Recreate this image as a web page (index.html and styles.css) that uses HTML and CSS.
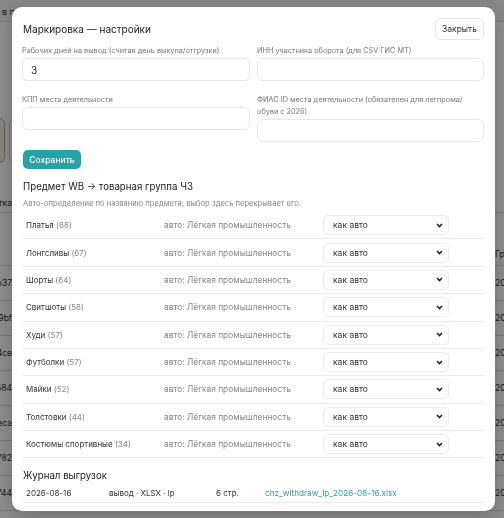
FILE: index.html
```html
<!DOCTYPE html>
<html>
<head>
  <meta charset="utf-8">
  <title>Маркировка</title>
  <link rel="stylesheet" href="styles.css">
</head>
<body>
  <!-- page behind the dialog -->
  <div class="page">
    <div class="topbar">в процессе выгрузки</div>
    <div class="cards">
      <div class="card card-ok"></div>
      <div class="card"></div>
    </div>
    <div class="tbl-head">
      <span class="cell-id">Отметка</span>
    </div>
    <div class="tbl-sub"><span class="cell-end">Группа</span></div>
    <div class="tbl-row"><span class="cell-id">7a1o37</span><span class="cell-end">2037</span></div>
    <div class="tbl-row"><span class="cell-id">c29bf</span><span class="cell-end">2037</span></div>
    <div class="tbl-row"><span class="cell-id">184ce</span><span class="cell-end">2037</span></div>
    <div class="tbl-row"><span class="cell-id">a0584</span><span class="cell-end">2037</span></div>
    <div class="tbl-row"><span class="cell-id">17eca</span><span class="cell-end">2037</span></div>
    <div class="tbl-row"><span class="cell-id">0f782</span><span class="cell-end">2037</span></div>
    <div class="tbl-row"><span class="cell-id">66744</span><span class="cell-end">2037</span></div>
  </div>

  <div class="backdrop">
    <div class="modal">
      <div class="modal-head">
        <h2>Маркировка — настройки</h2>
        <button class="btn-ghost" type="button">Закрыть</button>
      </div>

      <div class="fields">
        <label class="field">
          <span>Рабочих дней на вывод (считая день выкупа/отгрузки)</span>
          <input type="text" value="3">
        </label>
        <label class="field">
          <span>ИНН участника оборота (для CSV ГИС МТ)</span>
          <input type="text">
        </label>
        <label class="field">
          <span>КПП места деятельности</span>
          <input type="text">
        </label>
        <label class="field">
          <span>ФИАС ID места деятельности (обязателен для легпрома/<br>обуви с 2026)</span>
          <input type="text">
        </label>
      </div>

      <button class="btn-primary" type="button">Сохранить</button>

      <h3>Предмет WB → товарная группа ЧЗ</h3>
      <p class="hint">Авто-определение по названию предмета; выбор здесь перекрывает его.</p>

      <div class="map">
        <div class="map-row"><span>Платья <i>(68)</i></span><span class="auto">авто: Лёгкая промышленность</span><select><option>как авто</option></select></div>
        <div class="map-row"><span>Лонгсливы <i>(67)</i></span><span class="auto">авто: Лёгкая промышленность</span><select><option>как авто</option></select></div>
        <div class="map-row"><span>Шорты <i>(64)</i></span><span class="auto">авто: Лёгкая промышленность</span><select><option>как авто</option></select></div>
        <div class="map-row"><span>Свитшоты <i>(58)</i></span><span class="auto">авто: Лёгкая промышленность</span><select><option>как авто</option></select></div>
        <div class="map-row"><span>Худи <i>(57)</i></span><span class="auto">авто: Лёгкая промышленность</span><select><option>как авто</option></select></div>
        <div class="map-row"><span>Футболки <i>(57)</i></span><span class="auto">авто: Лёгкая промышленность</span><select><option>как авто</option></select></div>
        <div class="map-row"><span>Майки <i>(52)</i></span><span class="auto">авто: Лёгкая промышленность</span><select><option>как авто</option></select></div>
        <div class="map-row"><span>Толстовки <i>(44)</i></span><span class="auto">авто: Лёгкая промышленность</span><select><option>как авто</option></select></div>
        <div class="map-row"><span>Костюмы спортивные <i>(34)</i></span><span class="auto">авто: Лёгкая промышленность</span><select><option>как авто</option></select></div>
      </div>

      <h3 class="log-title">Журнал выгрузок</h3>
      <div class="log-row">
        <span>2026-08-16</span>
        <span>вывод · XLSX · lp</span>
        <span>6 стр.</span>
        <a href="#">chz_withdraw_lp_2026-08-16.xlsx</a>
      </div>
    </div>
  </div>
</body>
</html>
```

FILE: styles.css
```css
* {
  box-sizing: border-box;
}

body {
  margin: 0;
  font-family: Inter, "Noto Sans", sans-serif;
  color: #222;
  background: #fff;
  overflow: hidden;
}

/* page under the dialog */
.page {
  height: 518px;
}

.topbar {
  height: 22px;
  padding: 6px 0 0 2px;
  font-size: 9px;
  color: #444;
  border-bottom: 1px solid #ddd;
  background: #f4f4f4;
}

.cards {
  display: flex;
  gap: 4px;
  margin: 96px 0 0 -6px;
}

.card {
  width: 120px;
  height: 45px;
  border: 1px solid #ccc;
  border-radius: 6px;
}

.card-ok {
  width: 11px;
  border-color: #b8b27a;
  background: #f4f2e4;
}

.tbl-head,
.tbl-sub,
.tbl-row {
  display: flex;
  justify-content: space-between;
  align-items: center;
  font-size: 8.5px;
  color: #333;
  border-bottom: 1px solid #d8d8d8;
}

.tbl-head {
  height: 20px;
  margin-top: 30px;
}

.tbl-sub {
  height: 53px;
  justify-content: flex-end;
  align-items: flex-end;
  padding-bottom: 6px;
}

.tbl-row {
  height: 35px;
}

.cell-id {
  width: 12px;
  overflow: hidden;
  direction: rtl;
  white-space: nowrap;
}

.cell-end {
  width: 9px;
  overflow: hidden;
  white-space: nowrap;
}

/* dialog */
.backdrop {
  position: fixed;
  inset: 0;
  background: rgba(0, 0, 0, 0.45);
  padding: 7px 0 0 12px;
}

.modal {
  width: 483px;
  background: #fff;
  border-radius: 10px;
  padding: 11px 11px 8px 10px;
  box-shadow: 0 6px 20px rgba(0, 0, 0, 0.2);
}

.modal-head {
  display: flex;
  justify-content: space-between;
  align-items: center;
}

.modal-head h2 {
  margin: 0 0 0 1px;
  font-size: 10px;
  font-weight: 400;
}

.btn-ghost {
  height: 22px;
  width: 49px;
  padding: 0;
  font-family: inherit;
  font-size: 8.5px;
  color: #333;
  background: #fff;
  border: 1px solid #e6e6e6;
  border-radius: 6px;
}

.fields {
  display: grid;
  grid-template-columns: 228px 227px;
  column-gap: 7px;
  row-gap: 13px;
  margin-top: 5px;
  align-items: start;
}

.field span {
  display: block;
  font-size: 7.3px;
  line-height: 12px;
  color: #777;
  margin-bottom: 1px;
}

.field input {
  display: block;
  width: 100%;
  height: 23px;
  padding: 0 8px;
  font-family: inherit;
  font-size: 10px;
  color: #222;
  border: 1px solid #e8e8e8;
  border-radius: 6px;
  outline: none;
}

.btn-primary {
  display: block;
  margin: 8px 0 0 1px;
  height: 19px;
  width: 58px;
  padding: 0;
  font-family: inherit;
  font-size: 8.5px;
  font-weight: 500;
  color: #fff;
  background: #24a4a6;
  border: none;
  border-radius: 5px;
}

h3 {
  margin: 10px 0 0 1px;
  font-size: 9.7px;
  line-height: 16px;
  font-weight: 400;
}

.hint {
  margin: 3px 0 0 1px;
  font-size: 7.6px;
  line-height: 12px;
  color: #888;
}

.map {
  margin-top: 2px;
}

.map-row {
  display: grid;
  grid-template-columns: 138px 159px 126px;
  align-items: center;
  padding: 3.2px 4px;
  border-bottom: 1px solid #ececec;
  font-size: 8px;
  color: #333;
}

.map-row i {
  font-style: normal;
  color: #888;
}

.map-row .auto {
  color: #888;
  font-size: 8.4px;
}

/* select with a small dark chevron on the right */
.map-row select {
  appearance: none;
  height: 20px;
  padding: 0 0 0 9px;
  font-family: inherit;
  font-size: 8.5px;
  color: #333;
  background: #fff url("data:image/svg+xml,%3Csvg xmlns='http://www.w3.org/2000/svg' width='7' height='5' viewBox='0 0 7 5'%3E%3Cpath d='M1 1l2.5 2.5L6 1' fill='none' stroke='%23222' stroke-width='1.6'/%3E%3C/svg%3E") no-repeat right 5px center;
  border: 1px solid #ececec;
  border-radius: 5px;
}

.log-title {
  margin-top: 10px;
}

.log-row {
  display: grid;
  grid-template-columns: 83px 107px 49px 1fr;
  align-items: center;
  height: 19px;
  padding: 0 4px;
  border-bottom: 1px solid #ececec;
  font-size: 8px;
  color: #333;
}

.log-row a {
  color: #2b9ea1;
  font-size: 8.2px;
  text-decoration: none;
}
```
